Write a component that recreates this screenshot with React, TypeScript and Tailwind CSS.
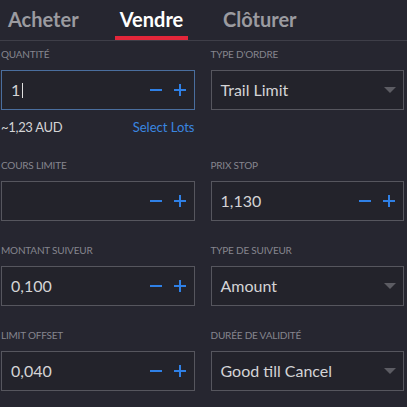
import React from 'react'

const font = { fontFamily: 'Lato, "Liberation Sans", sans-serif' }

const Stepper = () => (
  <svg width="36" height="12" viewBox="0 0 36 12" className="shrink-0 fill-[#2f80e6]">
    <rect x="0" y="5" width="12" height="2" />
    <rect x="24" y="5" width="12" height="2" />
    <rect x="29" y="0" width="2" height="12" />
  </svg>
)

const Caret = () => (
  <svg width="12" height="6" viewBox="0 0 12 6" className="shrink-0 fill-[#5c5c63]">
    <path d="M0 0 H12 L6 6 Z" />
  </svg>
)

const Label: React.FC<{ children: React.ReactNode }> = ({ children }) => (
  <div className="h-3 text-[10px] leading-3 uppercase text-[#85858e] tracking-[-0.2px]">{children}</div>
)

const NumberField: React.FC<{ label: string; value?: string; focused?: boolean; cursor?: boolean }> = ({
  label,
  value,
  focused,
  cursor,
}) => (
  <div>
    <Label>{label}</Label>
    <div
      className={`mt-[10px] h-10 flex items-center pl-[9px] pr-2 bg-[#23232b] border ${
        focused ? 'border-[#4a6e9e]' : 'border-[#56565e]'
      }`}
    >
      <div className="flex-1 flex items-center text-[16px] text-[#d4d4d6]">
        {value}
        {cursor && <span className="ml-[2px] inline-block w-px h-[15px] bg-[#e0e0e0]" />}
      </div>
      <Stepper />
    </div>
  </div>
)

const SelectField: React.FC<{ label: string; value: string }> = ({ label, value }) => (
  <div>
    <Label>{label}</Label>
    <div className="mt-[10px] h-10 flex items-center pl-[9px] pr-[7px] bg-[#23232b] border border-[#56565e]">
      <div className="flex-1 text-[16px] text-[#d4d4d6]">{value}</div>
      <Caret />
    </div>
  </div>
)

export default function App() {
  return (
    <div className="w-[407px] h-[407px] bg-[#262630] overflow-hidden" style={font}>
      <div className="h-[41px] flex items-end border-b border-[#3e3e48] text-[20px] font-bold">
        <div className="pl-[8px] w-[115px] h-full flex items-center text-[#9b9ba0] pb-[3px]">Acheter</div>
        <div className="w-[73px] h-full flex flex-col">
          <div className="flex-1 flex items-center justify-center text-white pt-[1px]">Vendre</div>
          <div className="h-1 bg-[#e3263a]" />
        </div>
        <div className="pl-[35px] h-full flex items-center text-[#9b9ba0] pb-[3px]">Clôturer</div>
      </div>

      <div className="pl-px pr-[3px] pt-[7px] grid grid-cols-2 gap-x-4">
        <div>
          <NumberField label="Quantité" value="1" focused cursor />
          <div className="mt-[10px] h-4 flex items-center justify-between text-[13px]">
            <span className="text-[#d4d4d6] tracking-[-0.3px]">~1,23 AUD</span>
            <span className="text-[#3a86e0]">Select Lots</span>
          </div>
        </div>
        <div>
          <SelectField label="Type d'ordre" value="Trail Limit" />
        </div>

        <div className="mt-[23px]">
          <NumberField label="Cours limite" />
        </div>
        <div className="mt-[23px]">
          <NumberField label="Prix stop" value="1,130" />
        </div>

        <div className="mt-[23px]">
          <NumberField label="Montant suiveur" value="0,100" />
        </div>
        <div className="mt-[23px]">
          <SelectField label="Type de suiveur" value="Amount" />
        </div>

        <div className="mt-[23px]">
          <NumberField label="Limit offset" value="0,040" />
        </div>
        <div className="mt-[23px]">
          <SelectField label="Durée de validité" value="Good till Cancel" />
        </div>
      </div>
    </div>
  )
}
